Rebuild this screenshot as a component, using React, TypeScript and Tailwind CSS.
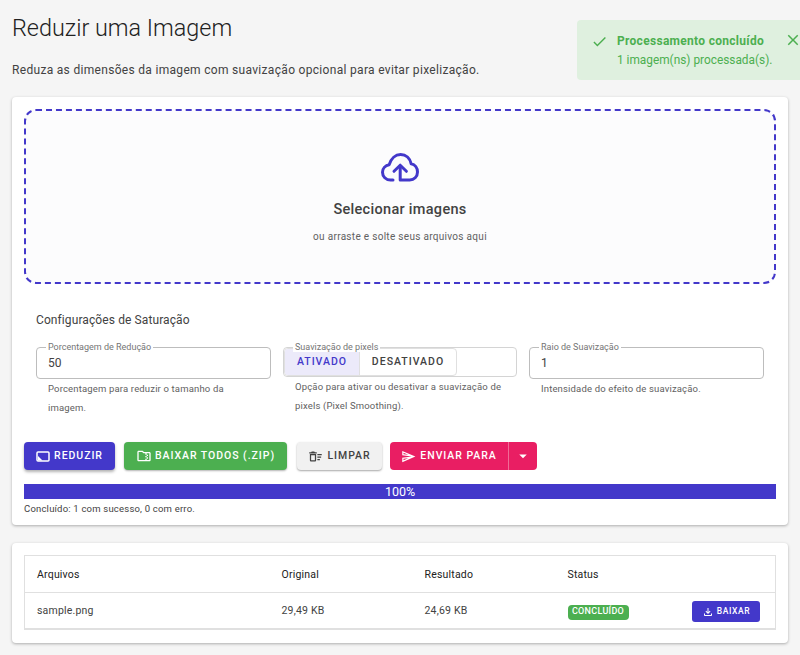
import { MdOutlineFolderZip, MdOutlineSend, MdArrowDropDown, MdOutlineFileDownload, MdCheck, MdClose, MdOutlineDeleteSweep } from "react-icons/md";

const font = "font-['Roboto',sans-serif]";

function Fieldset({ label, width, children, helper }: { label: string; width: string; children: React.ReactNode; helper: React.ReactNode }) {
  return (
    <div className={width}>
      <fieldset className="m-0 h-[36px] min-w-0 rounded-[4px] border border-[#bdbdbd] px-[9px]">
        <legend className="px-[2px] text-[9px] leading-[9px] text-[#757575]">{label}</legend>
        {children}
      </fieldset>
      <div className="pl-[12px] text-[9.5px] leading-[19px] tracking-[0.16px] text-[#616161]">{helper}</div>
    </div>
  );
}

function ResizeIcon() {
  return (
    <svg width="14" height="11" viewBox="0 0 14 11" fill="none" className="shrink-0">
      <rect x="1" y="1" width="12" height="9" rx="1" stroke="white" strokeWidth="1.5" />
      <path d="M2 9.5V5L6.5 9.5Z" fill="white" />
    </svg>
  );
}

function CloudIcon() {
  return (
    <svg width="38" height="29" viewBox="0 0 38 29" fill="none" stroke="#4338ca" strokeWidth="3" strokeLinecap="round" strokeLinejoin="round">
      <path d="M12 27H9.5C4.8 27 1.5 23.5 1.5 19.3C1.5 15.2 4.6 12.2 8.2 11.7C10 5.6 14.5 1.5 19.6 1.5C25 1.5 29 5.6 30.2 10.8C34 11.5 36.5 15 36.5 19C36.5 23.8 33 27 28.8 27H19.2V13" />
      <path d="M13 18.3L19.2 12.2L25.4 18.3" />
    </svg>
  );
}

export default function App() {
  return (
    <div className={`${font} relative h-[655px] w-[800px] overflow-hidden bg-[#f5f5f5] px-[12px] pt-[14px]`}>
      <h1 className="text-[23.4px] leading-[28px] font-light text-[#212121]">Reduzir uma Imagem</h1>
      <p className="mt-[20px] text-[12px] leading-[16px] tracking-[0.31px] text-[#424242]">Reduza as dimensões da imagem com suavização opcional para evitar pixelização.</p>

      <div className="absolute right-0 top-[20px] flex h-[60px] w-[223px] rounded-l-[4px] bg-[#dff0df] text-[#4caf50]">
        <MdCheck className="ml-[14px] mt-[13px] shrink-0 text-[17px]" />
        <div className="ml-[9px] mt-[13px]">
          <div className="text-[12px] leading-[17px] font-bold tracking-[0.3px]">Processamento concluído</div>
          <div className="text-[11.85px] leading-[20px]">1 imagem(ns) processada(s).</div>
        </div>
        <MdClose className="absolute right-[-2px] top-[11px] text-[18px]" />
      </div>

      <div className="mt-[19px] h-[428px] w-[776px] rounded-[4px] bg-white px-[12px] pt-[12px] shadow-[0_1px_3px_rgba(0,0,0,0.3)]">
        <div className="flex h-[175px] w-[752px] flex-col items-center rounded-[12px] border-2 border-dashed border-[#4338ca] bg-[#fcfcfd] pt-[42px]">
          <CloudIcon />
          <div className="mt-[18px] text-[14.5px] leading-[20px] font-medium tracking-[0.3px] text-[#424242]">Selecionar imagens</div>
          <div className="mt-[10px] text-[10px] leading-[14px] tracking-[0.3px] text-[#616161]">ou arraste e solte seus arquivos aqui</div>
        </div>

        <div className="ml-[12px] mt-[28px] text-[12px] leading-[16px] tracking-[0.1px] text-[#424242]">Configurações de Saturação</div>

        <div className="ml-[12px] mt-[15px] flex h-[88px] gap-[12px]">
          <Fieldset label="Porcentagem de Redução" width="w-[235px]" helper={<>Porcentagem para reduzir o tamanho da<br />imagem.</>}>
            <div className="ml-[2px] mt-[1px] text-[12px] leading-[20px] text-[#424242]">50</div>
          </Fieldset>
          <div className="w-[234px]">
            <fieldset className="m-0 h-[34px] min-w-0 rounded-[4px] border border-[#d4d4d4] p-0">
              <legend className="relative z-10 ml-[9px] bg-white px-[2px] text-[9px] leading-[9px] text-[#757575]">Suavização de pixels</legend>
              <div className="-mt-[4px] flex h-[28px] w-[173px] overflow-hidden rounded-[4px] border border-[#e0e0e0] text-[10.5px] font-medium tracking-[1px]">
                <div className="flex w-[74px] items-center justify-center bg-[#eceafa] text-[#4338ca]">ATIVADO</div>
                <div className="flex flex-1 items-center justify-center border-l border-[#e0e0e0] text-[#424242]">DESATIVADO</div>
              </div>
            </fieldset>
            <div className="ml-[12px] text-[9.5px] leading-[19px] tracking-[0.16px] text-[#616161]">Opção para ativar ou desativar a suavização de<br />pixels (Pixel Smoothing).</div>
          </div>
          <Fieldset label="Raio de Suavização" width="w-[235px]" helper="Intensidade do efeito de suavização.">
            <div className="ml-[2px] mt-[1px] text-[12px] leading-[20px] text-[#424242]">1</div>
          </Fieldset>
        </div>

        <div className="mt-[11px] flex h-[28px] gap-[9px] text-[10.5px] font-medium tracking-[0.95px]">
          <button className="flex w-[91px] items-center justify-center gap-[4px] rounded-[4px] bg-[#4338ca] text-white shadow-[0_2px_3px_rgba(0,0,0,0.3)]"><ResizeIcon />REDUZIR</button>
          <button className="flex w-[163px] items-center justify-center gap-[3px] rounded-[4px] bg-[#4caf50] text-white shadow-[0_1px_2px_rgba(0,0,0,0.3)]"><MdOutlineFolderZip className="text-[16px]" />BAIXAR TODOS (.ZIP)</button>
          <button className="ml-[1px] -mr-[1px] flex w-[85px] items-center justify-center gap-[4px] rounded-[4px] bg-[#f1f1f1] text-[#424242] shadow-[0_1px_2px_rgba(0,0,0,0.35)]"><MdOutlineDeleteSweep className="text-[15px]" />LIMPAR</button>
          <div className="flex w-[147px] rounded-[4px] bg-[#e91e63] text-white">
            <button className="flex w-[119px] items-center justify-center gap-[4px] border-r border-[#f06b96]"><MdOutlineSend className="text-[15px]" />ENVIAR PARA</button>
            <button className="flex flex-1 items-center justify-center"><MdArrowDropDown className="text-[18px]" /></button>
          </div>
        </div>

        <div className="mt-[14px] flex h-[15px] w-[752px] items-center justify-center bg-[#4338ca] text-[12.5px] leading-[15px] text-white">100%</div>
        <div className="mt-[3px] text-[9.5px] leading-[14px] tracking-[0.2px] text-[#424242]">Concluído: 1 com sucesso, 0 com erro.</div>
      </div>

      <div className="mt-[18px] h-[100px] w-[776px] rounded-[4px] bg-white px-[12px] pt-[12px] shadow-[0_1px_3px_rgba(0,0,0,0.3)]">
        <table className="h-[75px] w-[752px] table-fixed border-collapse border border-b-2 border-[#e0e0e0] text-[10.5px] tracking-[0.2px]">
          <colgroup>
            <col className="w-[244px]" /><col className="w-[143px]" /><col className="w-[143px]" /><col className="w-[122px]" /><col />
          </colgroup>
          <tbody>
            <tr className="h-[37px] border-b border-[#e0e0e0] text-[#212121]">
              <td className="pl-[12px] pt-[1px]">Arquivos</td><td className="pl-[13px] pt-[1px]">Original</td><td className="pl-[13px] pt-[1px]">Resultado</td><td className="pl-[13px] pt-[1px]">Status</td><td />
            </tr>
            <tr className="text-[#424242]">
              <td className="pl-[12px]">sample.png</td><td className="pl-[13px]">29,49 KB</td><td className="pl-[13px]">24,69 KB</td>
              <td className="pl-[13px] pt-[2px]"><span className="inline-flex h-[15px] w-[61px] items-center justify-center rounded-[4px] bg-[#4caf50] text-[9px] font-medium tracking-[0.3px] text-white">CONCLUÍDO</span></td>
              <td className="pt-[2px]"><button className="ml-auto mr-[15px] flex h-[21px] w-[68px] items-center justify-center gap-[3px] rounded-[3px] bg-[#4338ca] text-[8.5px] font-medium tracking-[0.6px] text-white"><MdOutlineFileDownload className="text-[12px]" />BAIXAR</button></td>
            </tr>
          </tbody>
        </table>
      </div>
    </div>
  );
}
